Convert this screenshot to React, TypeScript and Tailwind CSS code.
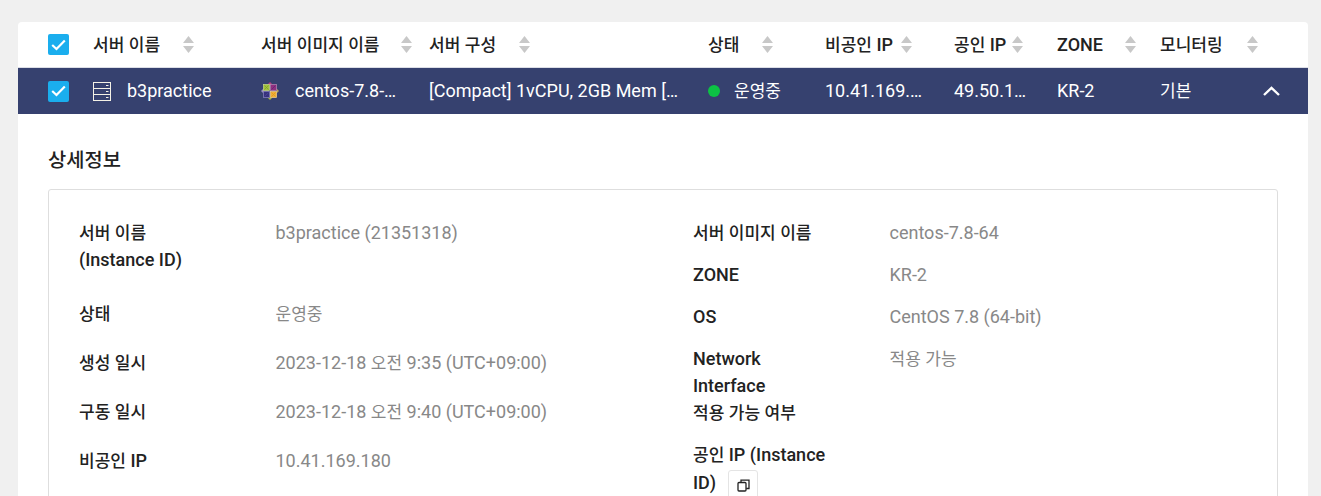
import React from "react";

const font = { fontFamily: '"Roboto","Noto Sans CJK KR",sans-serif' };

function T({ children }: { children: string }) {
  const parts = children.split(/([가-힣]+)/);
  return (
    <>
      {parts.map((p, i) =>
        i % 2 === 1 ? (
          <span key={i} className="text-[0.945em] leading-[0]">
            {p}
          </span>
        ) : (
          <React.Fragment key={i}>{p}</React.Fragment>
        )
      )}
    </>
  );
}

function Check() {
  return (
    <span className="flex h-[21px] w-[21px] items-center justify-center rounded-[2px] bg-[#1aaeee]">
      <svg width="15" height="12" viewBox="0 0 15 12" fill="none">
        <path d="M1.2 6 L5.5 10 L13.8 1.6" stroke="#fff" strokeWidth="2.2" />
      </svg>
    </span>
  );
}

function Sort({ ml }: { ml: string }) {
  return (
    <svg className={`${ml} shrink-0`} width="11" height="17" viewBox="0 0 11 17" fill="#c8c8c8">
      <path d="M5.5 0 L11 7 L0 7 Z" />
      <path d="M0 10 L11 10 L5.5 17 Z" />
    </svg>
  );
}

function ServerIcon() {
  return (
    <svg width="18" height="19" viewBox="0 0 18 19" fill="none" stroke="#f4f1e6" strokeWidth="1">
      <rect x="0.5" y="0.5" width="17" height="18" />
      <path d="M0.5 6.5 H17.5 M0.5 12.5 H17.5" />
      <path d="M13 3.5 H15.5 M13 9.5 H15.5 M13 15.5 H15.5" strokeWidth="1.2" />
    </svg>
  );
}

function CentosIcon() {
  return (
    <svg width="18" height="18" viewBox="0 0 18 18">
      <path d="M9 0 L11.5 2.5 H6.5 Z" fill="#b5437f" />
      <path d="M9 18 L11.5 15.5 H6.5 Z" fill="#a4b84a" />
      <path d="M0 9 L2.5 6.5 V11.5 Z" fill="#9a8fc0" />
      <path d="M18 9 L15.5 6.5 V11.5 Z" fill="#b9a35a" />
      <rect x="2.5" y="2.5" width="6" height="6" fill="#a4c639" stroke="#c9d98a" strokeWidth="0.7" />
      <rect x="9.5" y="2.5" width="6" height="6" fill="#8f2f80" stroke="#b98ab5" strokeWidth="0.7" />
      <rect x="2.5" y="9.5" width="6" height="6" fill="#37327f" stroke="#8c86c0" strokeWidth="0.7" />
      <rect x="9.5" y="9.5" width="6" height="6" fill="#f2b233" stroke="#f3d28c" strokeWidth="0.7" />
      <path d="M3.5 3.5 L7.5 7.5 M7.5 3.5 L3.5 7.5" stroke="#7f9c35" strokeWidth="0.8" />
      <path d="M10.5 7.5 L14.5 3.5" stroke="#5f2a72" strokeWidth="0.8" />
      <path d="M3.5 14.5 L7.5 10.5" stroke="#4a4590" strokeWidth="0.8" />
      <path d="M10.5 10.5 L14.5 14.5 M14.5 10.5 L10.5 14.5" stroke="#d9942a" strokeWidth="0.8" />
    </svg>
  );
}

const headers: [string, string][] = [
  ["서버 이름", "ml-[23px]"],
  ["서버 이미지 이름", "ml-[22px]"],
  ["서버 구성", "ml-[23px]"],
  ["상태", "ml-[23px]"],
  ["비공인 IP", "ml-[8px]"],
  ["공인 IP", "ml-[6px]"],
  ["ZONE", "ml-[22px]"],
  ["모니터링", "ml-[24px]"],
];

const colClass = "grid grid-cols-[45px_168px_168px_279px_117px_129px_103px_103px_1fr]";

function Label({ children }: { children: React.ReactNode }) {
  return <div className="w-[196.5px] shrink-0 font-medium text-[#222]">{children}</div>;
}
function Value({ children }: { children: string }) {
  return (
    <div className="text-[#888]">
      <T>{children}</T>
    </div>
  );
}

export default function App() {
  return (
    <div className="h-[496px] overflow-hidden bg-[#f0f0f0] pl-[18px] pr-[13px] pt-[22px]" style={font}>
      <div className="rounded-t-[4px] bg-white">
        <div className={`${colClass} h-[46px] items-center border-b border-[#dcdee6] pl-[30px] text-[18px] font-medium text-[#222]`}>
          <Check />
          {headers.map(([t, ml]) => (
            <div key={t} className="flex items-center">
              <span>
                <T>{t}</T>
              </span>
              <Sort ml={ml} />
            </div>
          ))}
        </div>
        <div className={`${colClass} h-[46px] items-center bg-[#36416f] pl-[30px] text-[18px] text-white`}>
          <Check />
          <div className="flex items-center gap-[16px]">
            <ServerIcon />
            <span className="pb-[2px]">b3practice</span>
          </div>
          <div className="flex items-center gap-[16px]">
            <CentosIcon />
            <span className="w-[104px] truncate pb-[2px]">centos-7.8-64</span>
          </div>
          <div className="w-[252px] truncate pb-[2px]">[Compact] 1vCPU, 2GB Mem [SSD 50GB]</div>
          <div className="flex items-center gap-[14px]">
            <span className="h-[12px] w-[12px] rounded-full bg-[#0cc244]" />
            <span className="pb-[2px]">
              <T>운영중</T>
            </span>
          </div>
          <div className="w-[98px] truncate pb-[2px]">10.41.169.180</div>
          <div className="w-[76px] truncate pb-[2px]">49.50.163.211</div>
          <div className="pb-[2px]">KR-2</div>
          <div className="flex items-center justify-between pr-[28px]">
            <span className="pb-[2px]">
              <T>기본</T>
            </span>
            <svg width="17" height="10" viewBox="0 0 17 10" fill="none">
              <path d="M1 9 L8.5 1.8 L16 9" stroke="#fff" strokeWidth="2.4" />
            </svg>
          </div>
        </div>
        <div className="px-[30px] pt-[33px]">
          <h2 className="text-[21px] font-medium leading-[27px] text-[#222]">
            <T>상세정보</T>
          </h2>
          <div className="mt-[15px] grid grid-cols-[614px_1fr] rounded-[3px] border border-[#dedede] px-[30px] pt-[29px] text-[18px] leading-[27px]">
            <div className="flex flex-col">
              <div className="mb-[27px] flex">
                <Label>
                  <T>서버 이름</T>
                  <br />
                  (Instance ID)
                </Label>
                <Value>b3practice (21351318)</Value>
              </div>
              <div className="mb-[22px] flex">
                <Label>
                  <T>상태</T>
                </Label>
                <Value>운영중</Value>
              </div>
              <div className="mb-[22px] flex">
                <Label>
                  <T>생성 일시</T>
                </Label>
                <Value>2023-12-18 오전 9:35 (UTC+09:00)</Value>
              </div>
              <div className="mb-[22px] flex">
                <Label>
                  <T>구동 일시</T>
                </Label>
                <Value>2023-12-18 오전 9:40 (UTC+09:00)</Value>
              </div>
              <div className="flex">
                <Label>
                  <T>비공인 IP</T>
                </Label>
                <Value>10.41.169.180</Value>
              </div>
            </div>
            <div className="flex flex-col gap-[15px]">
              <div className="flex">
                <Label>
                  <T>서버 이미지 이름</T>
                </Label>
                <Value>centos-7.8-64</Value>
              </div>
              <div className="flex">
                <Label>ZONE</Label>
                <Value>KR-2</Value>
              </div>
              <div className="flex">
                <Label>OS</Label>
                <Value>CentOS 7.8 (64-bit)</Value>
              </div>
              <div className="flex">
                <Label>
                  Network
                  <br />
                  Interface
                  <br />
                  <T>적용 가능 여부</T>
                </Label>
                <Value>적용 가능</Value>
              </div>
              <div className="flex">
                <Label>
                  <T>공인 IP (Instance</T>
                  <br />
                  ID)
                  <span className="ml-[12px] mt-[2px] inline-flex h-[30px] w-[30px] items-center justify-center rounded-[3px] border border-[#e4e4e4] align-middle">
                    <svg width="13" height="13" viewBox="0 0 13 13" fill="none" stroke="#222" strokeWidth="1.3">
                      <rect x="1" y="3.5" width="8" height="8.5" rx="1" />
                      <path d="M4 3.2 V1.2 H12 V9.5 H9.2" />
                    </svg>
                  </span>
                </Label>
              </div>
              <div className="h-[100px]" />
            </div>
          </div>
        </div>
      </div>
    </div>
  );
}
